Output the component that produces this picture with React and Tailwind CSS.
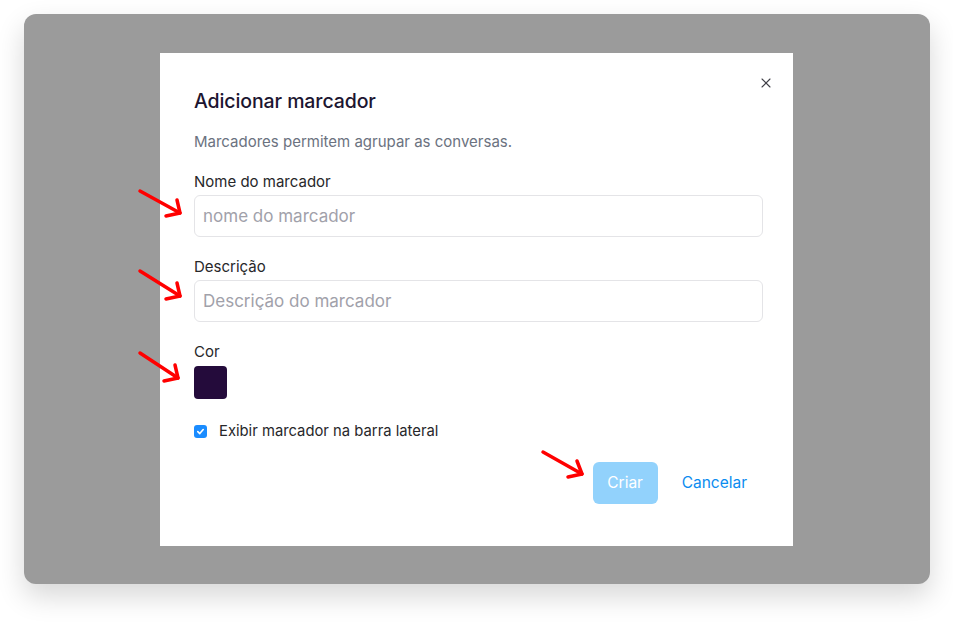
import { X } from 'lucide-react';

const Arrow = ({ x1, y1, x2, y2, a1, a2 }) => (
  <g stroke="#ff0000" strokeWidth="3.5" strokeLinecap="round" strokeLinejoin="round" fill="none">
    <line x1={x1} y1={y1} x2={x2} y2={y2} />
    <polyline points={`${a1[0]},${a1[1]} ${x2},${y2} ${a2[0]},${a2[1]}`} />
  </g>
);

export default function App() {
  return (
    <div
      className="relative w-[953px] h-[632px] bg-white pt-[14px] pl-[24px]"
      style={{ fontFamily: 'Inter, "Noto Sans", sans-serif' }}
    >
      <div className="w-[906px] h-[570px] rounded-xl bg-[#9b9b9b] shadow-[0_12px_28px_rgba(0,0,0,0.16)] flex items-center pl-[136px]">
        <div className="relative w-[633px] h-[493px] bg-white pl-[34px] pr-[30px] pt-[34px]">
          <button type="button" className="absolute right-[19px] top-[22px] text-[#3f3f46]">
            <X size={16} strokeWidth={1.6} />
          </button>

          <h2 className="text-[19.5px] leading-7 font-medium text-[#1c1530] tracking-[-0.1px]">Adicionar marcador</h2>
          <p className="mt-4 text-[15px] leading-5 text-[#6b7280] translate-y-px">Marcadores permitem agrupar as conversas.</p>

          <label className="block mt-5 text-[15px] leading-5 text-[#27272a] translate-y-px">Nome do marcador</label>
          <input
            type="text"
            placeholder="nome do marcador"
            className="mt-1 w-full h-[42px] rounded-md border border-[#e4e4e7] px-[8px] text-[17px] placeholder:text-[#a1a1aa] outline-none"
          />

          <label className="block mt-[19px] text-[15px] leading-5 text-[#27272a] translate-y-px">Descrição</label>
          <input
            type="text"
            placeholder="Descrição do marcador"
            className="mt-1 w-full h-[42px] rounded-md border border-[#e4e4e7] px-[8px] text-[17px] placeholder:text-[#a1a1aa] outline-none"
          />

          <label className="block mt-[19px] text-[15px] leading-5 text-[#27272a] translate-y-px">Cor</label>
          <div className="mt-[5px] w-[33px] h-[33px] rounded-[4px] bg-[#240b3b]" />

          <div className="mt-[23px] flex items-center gap-[12px] h-5">
            <span className="w-[13px] h-[13px] rounded-[3px] bg-[#1a8cff] flex items-center justify-center">
              <svg width="9" height="9" viewBox="0 0 10 10" fill="none" stroke="white" strokeWidth="1.8" strokeLinecap="round" strokeLinejoin="round">
                <path d="M2 5.2 4.2 7.3 8 2.8" />
              </svg>
            </span>
            <span className="text-[14.8px] text-[#27272a]">Exibir marcador na barra lateral</span>
          </div>

          <div className="mt-[20px] flex justify-end gap-2">
            <button type="button" className="h-[42px] w-[65px] rounded-md bg-[#92d2fc] text-white text-[15.5px]">Criar</button>
            <button type="button" className="h-[42px] px-4 rounded-md text-[#0b8cf0] text-[15.5px]">Cancelar</button>
          </div>
        </div>
      </div>

      <svg className="absolute inset-0 pointer-events-none" width="953" height="632">
        <Arrow x1={140} y1={191} x2={180} y2={213} a1={[177, 200]} a2={[166, 216]} />
        <Arrow x1={140} y1={271} x2={180} y2={296} a1={[177, 283]} a2={[166, 299]} />
        <Arrow x1={140} y1={353} x2={178} y2={378} a1={[175, 365]} a2={[164, 381]} />
        <Arrow x1={543} y1={452} x2={582} y2={474} a1={[577, 461]} a2={[568, 477]} />
      </svg>
    </div>
  );
}
